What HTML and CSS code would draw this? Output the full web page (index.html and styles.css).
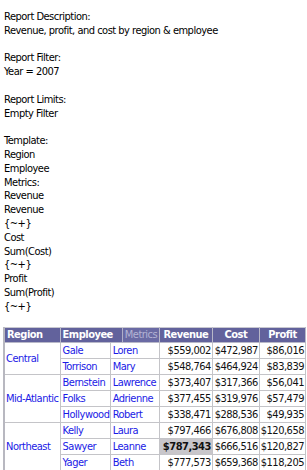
FILE: index.html
```html
<!DOCTYPE html>
<html>
<head>
<meta charset="utf-8">
<link rel="stylesheet" href="styles.css">
</head>
<body>
<div class="details">
<div class="line">Report Description:</div>
<div class="line">Revenue, profit, and cost by region &amp; employee</div>
<div class="line blank"></div>
<div class="line">Report Filter:</div>
<div class="line">Year = 2007</div>
<div class="line blank"></div>
<div class="line">Report Limits:</div>
<div class="line">Empty Filter</div>
<div class="line blank"></div>
<div class="line">Template:</div>
<div class="line">Region</div>
<div class="line">Employee</div>
<div class="line">Metrics:</div>
<div class="line">Revenue</div>
<div class="line">Revenue</div>
<div class="line">{~+}</div>
<div class="line">Cost</div>
<div class="line">Sum(Cost)</div>
<div class="line">{~+}</div>
<div class="line">Profit</div>
<div class="line">Sum(Profit)</div>
<div class="line">{~+}</div>
</div>
<table class="grid">
<colgroup>
<col class="c-region"><col class="c-last"><col class="c-first"><col class="c-rev"><col class="c-cost"><col class="c-profit">
</colgroup>
<thead>
<tr>
<th class="h-attr">Region</th>
<th class="h-attr" colspan="2"><div class="emp-head"><span class="emp-label">Employee</span><span class="metrics-label">Metrics</span></div></th>
<th class="h-metric">Revenue</th>
<th class="h-metric">Cost</th>
<th class="h-metric">Profit</th>
</tr>
</thead>
<tbody>
<tr><td class="region" rowspan="2">Central</td><td class="link">Gale</td><td class="link">Loren</td><td class="num">$559,002</td><td class="num">$472,987</td><td class="num">$86,016</td></tr>
<tr><td class="link">Torrison</td><td class="link">Mary</td><td class="num">$548,764</td><td class="num">$464,924</td><td class="num">$83,839</td></tr>
<tr><td class="region" rowspan="3">Mid-Atlantic</td><td class="link">Bernstein</td><td class="link">Lawrence</td><td class="num">$373,407</td><td class="num">$317,366</td><td class="num">$56,041</td></tr>
<tr><td class="link">Folks</td><td class="link">Adrienne</td><td class="num">$377,455</td><td class="num">$319,976</td><td class="num">$57,479</td></tr>
<tr><td class="link">Hollywood</td><td class="link">Robert</td><td class="num">$338,471</td><td class="num">$288,536</td><td class="num">$49,935</td></tr>
<tr><td class="region" rowspan="3">Northeast</td><td class="link">Kelly</td><td class="link">Laura</td><td class="num">$797,466</td><td class="num">$676,808</td><td class="num">$120,658</td></tr>
<tr><td class="link">Sawyer</td><td class="link">Leanne</td><td class="num hl">$787,343</td><td class="num">$666,516</td><td class="num">$120,827</td></tr>
<tr><td class="link">Yager</td><td class="link">Beth</td><td class="num">$777,573</td><td class="num">$659,368</td><td class="num">$118,205</td></tr>
</tbody>
</table>
</body>
</html>
```
FILE: styles.css
```css
html, body {
  margin: 0;
  background: #ffffff;
}
body {
  padding: 10px 0 0 4px;
  font-family: "DejaVu Sans Condensed", "Liberation Sans", sans-serif;
  font-size: 11px;
  letter-spacing: -0.5px;
  color: #000000;
}
.details {
  line-height: 13.8px;
}
.line {
  height: 13.8px;
  white-space: nowrap;
}
.grid {
  margin: 13px 0 0 -1px;
  border-collapse: collapse;
  table-layout: fixed;
  width: 303px;
  border-left: 2px solid #b8b8c0;
  font-size: 11px;
}
.c-region { width: 56px; }
.c-last { width: 50px; }
.c-first { width: 49px; }
.c-rev { width: 53px; }
.c-cost { width: 47px; }
.c-profit { width: 46px; }
.grid th {
  background: #62629c;
  color: #ffffff;
  font-weight: bold;
  height: 14px;
  padding: 0 2px;
  border: 1px solid #b8b8c8;
  border-top: 1px solid #c8c8d0;
  white-space: nowrap;
  overflow: hidden;
}
.grid th.h-attr { text-align: left; }
.grid th.h-metric { text-align: center; }
.grid th[colspan] { padding: 0 0 0 2px; }
.emp-head {
  display: flex;
  justify-content: space-between;
  align-items: stretch;
  height: 14px;
}
.metrics-label {
  font-weight: normal;
  color: #b4b4d4;
  background: #6a6aa4;
  border-left: 1px solid #b0b0c8;
  padding: 0 0 0 2px;
  overflow: hidden;
  width: 34px;
}
.grid td {
  height: 15px;
  padding: 0 2px;
  border: 1px solid #c4c4c8;
  white-space: nowrap;
  overflow: hidden;
}
.grid td.region {
  color: #1a1ae6;
  vertical-align: middle;
  padding-left: 1px;
}
.grid td.link {
  color: #1a1ae6;
}
.grid td.num {
  text-align: right;
  color: #111111;
  padding: 0 1px 0 0;
}
.grid td.hl {
  background: #c8c6ca;
  font-weight: bold;
}
```
